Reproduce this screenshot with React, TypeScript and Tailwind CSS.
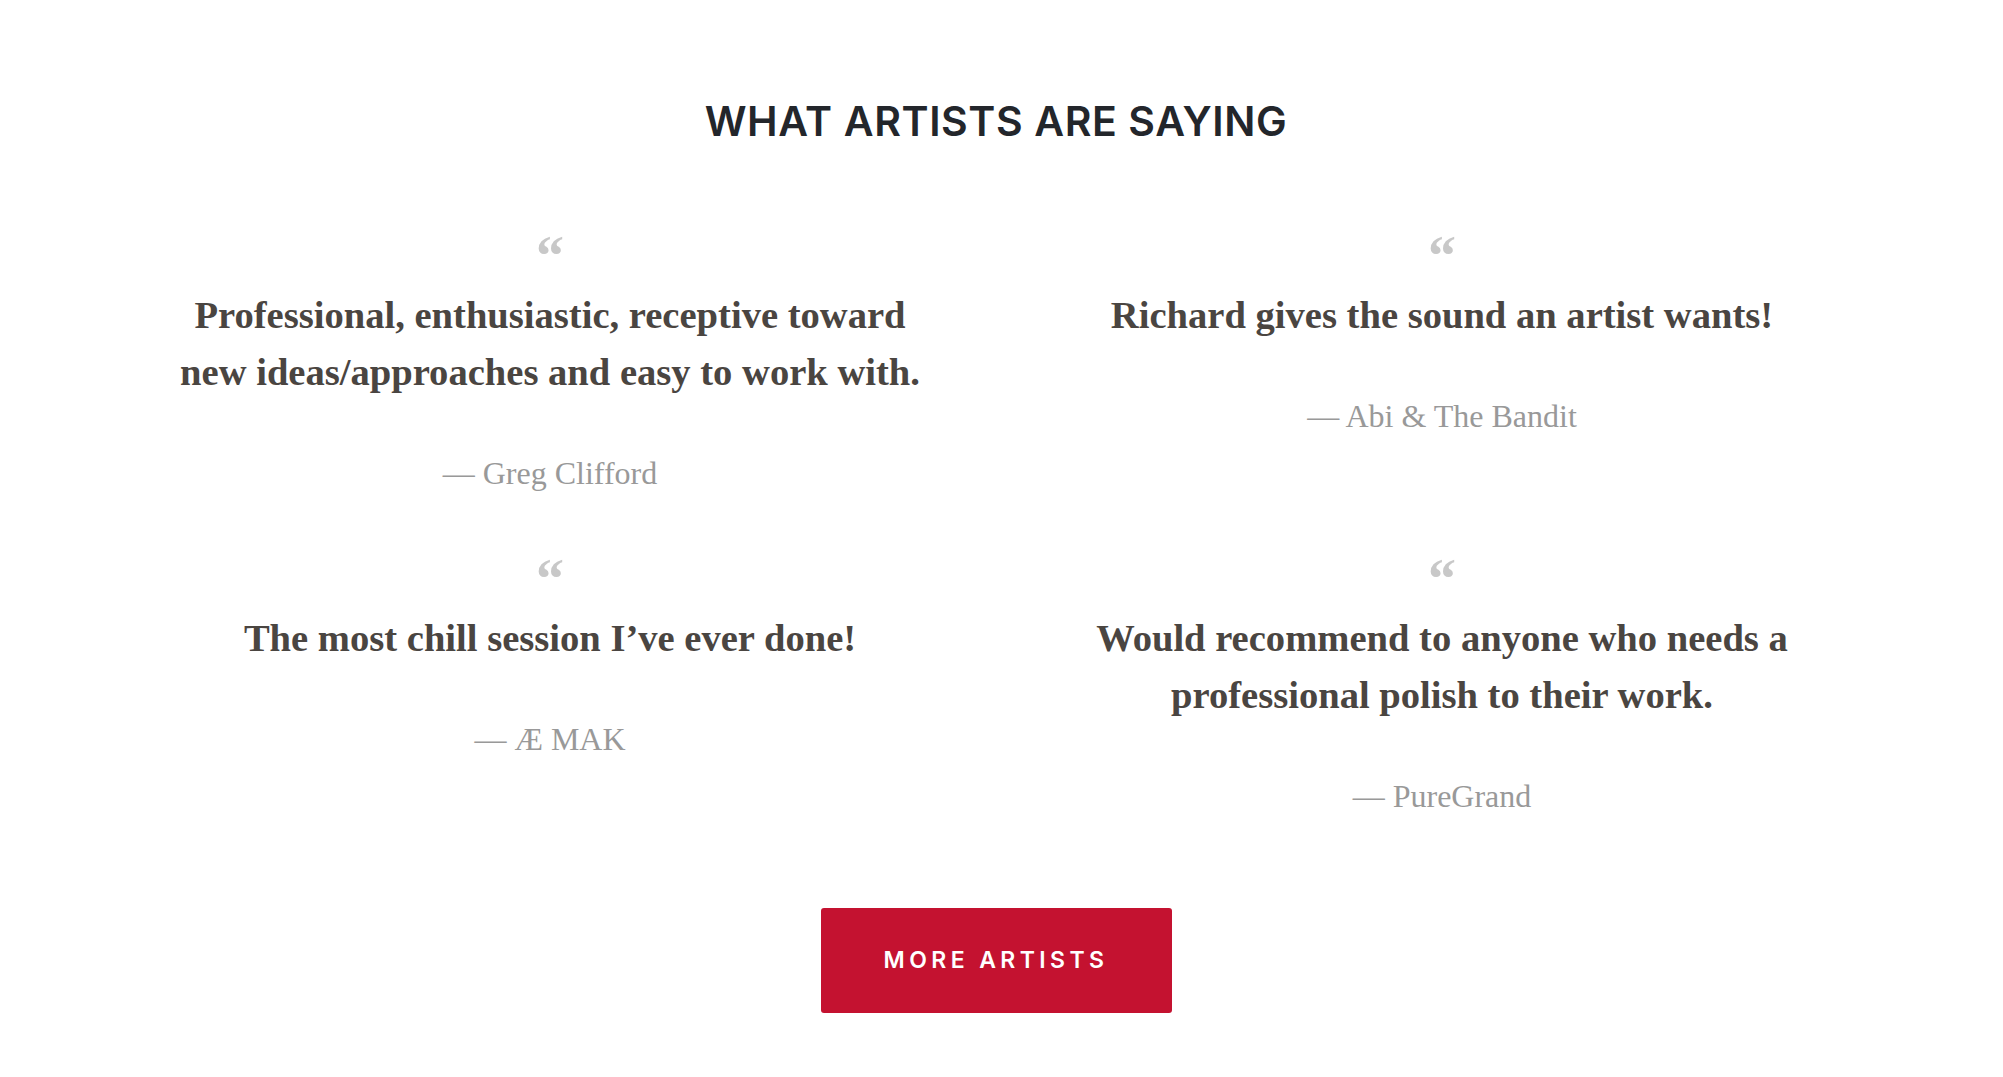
import React from "react";

const items = [
  {
    q: "Professional, enthusiastic, receptive toward new ideas/approaches and easy to work with.",
    a: "Greg Clifford",
  },
  { q: "Richard gives the sound an artist wants!", a: "Abi & The Bandit" },
  { q: "The most chill session I\u2019ve ever done!", a: "\u00C6 MAK" },
  {
    q: "Would recommend to anyone who needs a professional polish to their work.",
    a: "PureGrand",
  },
];

export default function App() {
  return (
    <div className="w-[2003px] min-h-[1077px] bg-white">
      <div className="w-[1992px] flex flex-col items-center pt-[96px] pb-[65px]">
        <h2 className="font-['Inter','Liberation_Sans',sans-serif] text-[41px] leading-[50px] font-semibold text-[#23262b] tracking-[0.6px]">
          WHAT ARTISTS ARE SAYING
        </h2>
        <div className="mt-[84px] grid grid-cols-2 w-[1784px] gap-y-[60px]">
          {items.map((it, i) => (
            <div key={i} className="flex flex-col items-center px-[66px] font-['Liberation_Serif',serif]">
              <div className="h-[30px] pt-[11px] text-[56px] leading-[30px] font-bold text-[#c8c8c8]">
                {"\u201C"}
              </div>
              <p className="mt-[27px] text-center text-[38.6px] leading-[57px] font-bold text-[#4a4541]">
                {it.q}
              </p>
              <div className="mt-[52px] text-[32px] leading-[40px] text-[#999999]">
                {"\u2014 "}
                {it.a}
              </div>
            </div>
          ))}
        </div>
        <button className="mt-[92px] w-[351px] h-[105px] rounded-[3px] bg-[#c41230] font-['Inter','Liberation_Sans',sans-serif] text-white text-[23px] font-semibold tracking-[4.4px]">
          MORE ARTISTS
        </button>
      </div>
    </div>
  );
}
